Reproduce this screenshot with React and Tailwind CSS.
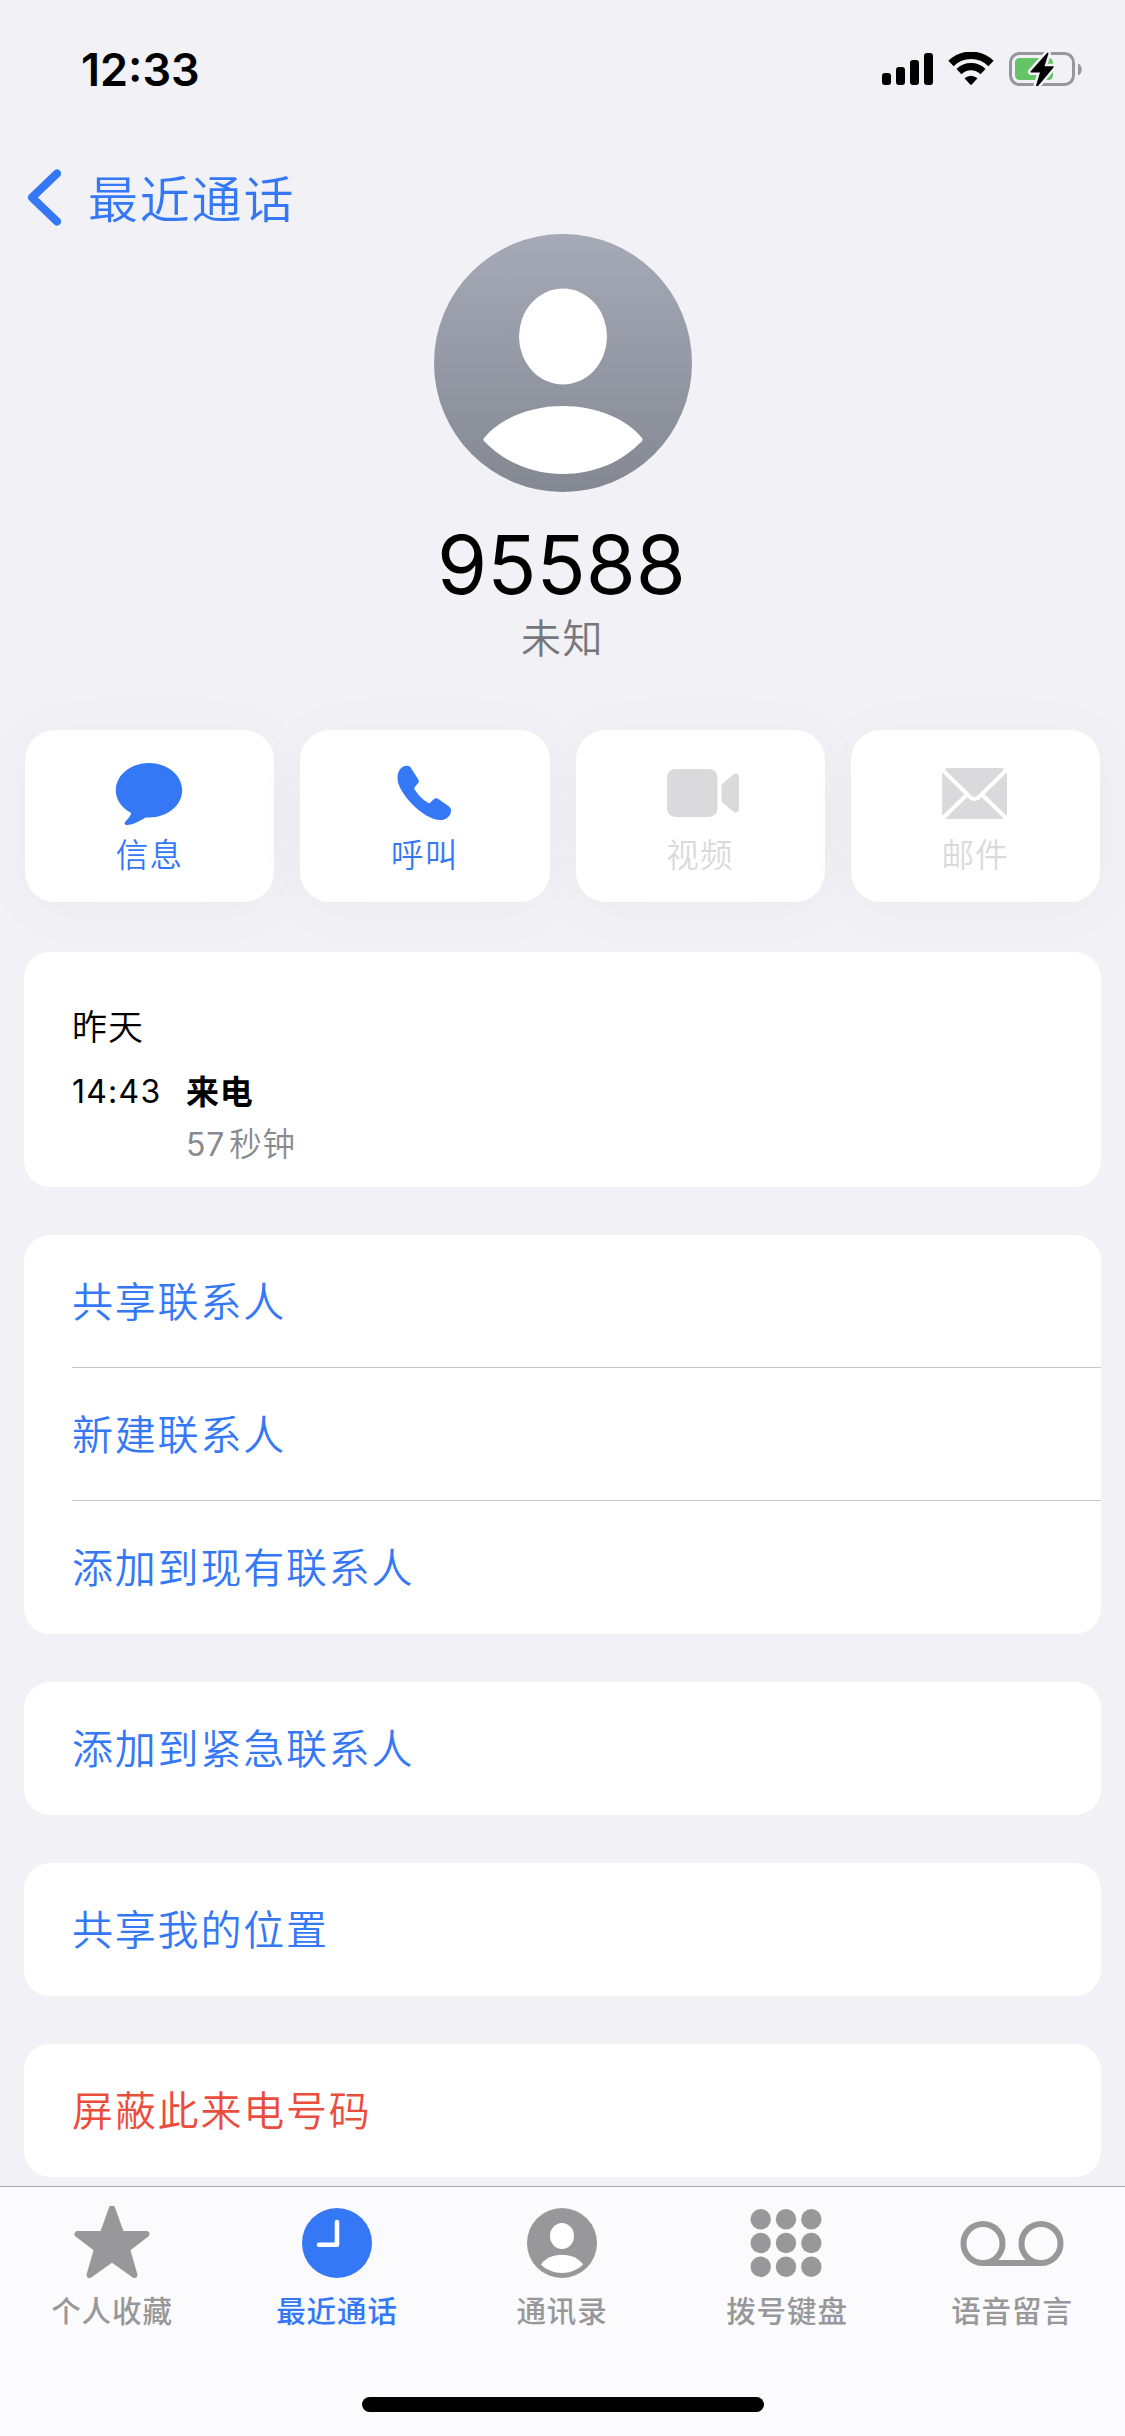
const ACTIONS = [
  { label: "信息", icon: MessageIcon, enabled: true },
  { label: "呼叫", icon: PhoneIcon, enabled: true },
  { label: "视频", icon: VideoIcon, enabled: false },
  { label: "邮件", icon: MailIcon, enabled: false },
];

const GROUPS = [
  { items: ["共享联系人", "新建联系人", "添加到现有联系人"] },
  { items: ["添加到紧急联系人"] },
  { items: ["共享我的位置"] },
  { items: ["屏蔽此来电号码"], danger: true },
];

const TABS = [
  { label: "个人收藏", icon: StarIcon },
  { label: "最近通话", icon: ClockIcon, active: true },
  { label: "通讯录", icon: ContactIcon },
  { label: "拨号键盘", icon: KeypadIcon },
  { label: "语音留言", icon: VoicemailIcon },
];

function MessageIcon() {
  return (
    <svg className="mr-[1px]" width="68" height="64" viewBox="0 0 68 64" fill="currentColor">
      <path d="M34 2C52.500 2 67.200 15 67.200 31C67.200 47 52.500 60 34 60C33 60 31.500 60 30.500 60C24.500 64.200 17 68 12 68C9.500 68 9 66 10.500 64.300C12.500 62 15 59 16 56.300C16.300 55.500 16 55.100 15.300 54.700C6.500 49.500 0.800 41 0.800 31C0.800 15 15.500 2 34 2Z" transform="scale(1 0.94)" />
    </svg>
  );
}

function PhoneIcon() {
  return (
    <svg width="55" height="56" viewBox="0 0 56 56" fill="currentColor">
      <path d="M12.300 0.700C13.600 1.300 14.300 2.500 15.200 4L21.700 14.200C22.600 15.800 22.300 17.100 21.200 18.400L18 22.200C17.400 22.900 17.400 23.500 17.800 24.200C21.300 29.800 26 34.700 31.800 38.200C32.500 38.600 33.100 38.600 33.700 38L37.200 34.700C38.700 33.300 40.300 33 42.100 34.100L52.300 41.200C54.200 42.500 55 43.800 55 45.700C55 51 50.300 55.500 44.300 55.500C35 55.500 24.500 48.500 15.500 39.500C6.500 30 0.500 20.500 0.500 12.800C0.500 6 3.800 1.700 8 0.500C9.500 0.100 11 0.100 12.300 0.700Z" />
    </svg>
  );
}

function VideoIcon() {
  return (
    <svg className="ml-[5px]" width="72" height="48" viewBox="0 0 72 48" fill="currentColor">
      <rect width="50.500" height="48" rx="8.500" />
      <path d="M54.500 17.500C54.500 16 55 15 56.200 14L65.500 6C67 4.700 68.300 4.200 69.500 4.600C71.200 5.100 72 6.500 72 8.500V39.500C72 41.500 71.200 42.900 69.500 43.400C68.300 43.800 67 43.300 65.500 42L56.200 34C55 33 54.500 32 54.500 30.500Z" />
    </svg>
  );
}

function MailIcon() {
  return (
    <svg className="mr-[1px]" width="65" height="51" viewBox="0 0 65 51" fill="none">
      <rect width="65" height="51" rx="6" fill="currentColor" />
      <path d="M0 1.500L27.500 28.500Q32.500 33.500 37.500 28.500L65 1.500M0.500 50.500L25 26.500M64.500 50.500L40 26.500" stroke="white" strokeWidth="4" />
    </svg>
  );
}

function StarIcon() {
  return (
    <svg className="mr-[1px]" width="78" height="74" viewBox="0 0 78 74" fill="currentColor">
      <path d="M39 3.500L48.300 29.500H73.500L54 44.500L61.500 70.500L39 54.500L16.500 70.500L24 44.500L4.500 29.500H29.700Z" stroke="currentColor" strokeWidth="6" strokeLinejoin="round" transform="translate(0 -1.500)" />
    </svg>
  );
}

function ClockIcon() {
  return (
    <svg className="mr-[2px]" width="70" height="70" viewBox="0 0 70 70">
      <circle cx="35" cy="35" r="35" fill="currentColor" />
      <path d="M35 14V36.700H17" fill="none" stroke="white" strokeWidth="4.600" strokeLinecap="round" strokeLinejoin="round" />
    </svg>
  );
}

function ContactIcon() {
  return (
    <svg className="mr-[2px]" width="70" height="70" viewBox="0 0 70 70">
      <circle cx="35" cy="35" r="35" fill="currentColor" />
      <ellipse cx="35" cy="28" rx="12" ry="13" fill="white" />
      <path d="M14 56.500C18 50.500 26 46.800 35 46.800S52 50.500 56 56.500C50.500 62 43 65 35 65S19.500 62 14 56.500Z" fill="white" />
    </svg>
  );
}

function KeypadIcon() {
  return (
    <svg className="mr-[3px]" width="72" height="70" viewBox="0 0 72 70" fill="currentColor">
      {[11.2, 35, 58.8].map((cy) =>
        [10.7, 36, 61.3].map((cx) => <circle key={cx + "-" + cy} cx={cx} cy={cy} r="10.200" />)
      )}
    </svg>
  );
}

function VoicemailIcon() {
  return (
    <svg className="mr-[1px]" width="104" height="70" viewBox="0 0 104 70" fill="none" stroke="currentColor" strokeWidth="6">
      <circle cx="23" cy="35.500" r="19.500" />
      <circle cx="81" cy="35.500" r="19.500" />
      <path d="M23 55H81" />
    </svg>
  );
}

function StatusBar() {
  return (
    <div className="flex h-[138px] items-center justify-between pr-[43px] pl-[81px]">
      <span className="font-['Inter',sans-serif] text-[45px] leading-none font-semibold">12:33</span>
      <div className="flex items-center">
        <svg width="51" height="34" viewBox="0 0 51 34">
          <rect x="0" y="21" width="9" height="12" rx="3" />
          <rect x="14" y="15" width="9" height="18" rx="3" />
          <rect x="28" y="8" width="9" height="25" rx="3" />
          <rect x="42" y="1" width="9" height="32" rx="3" />
        </svg>
        <svg className="ml-[15px]" width="46" height="34" viewBox="0 0 46 34">
          <path d="M3 11.500A28.500 28.500 0 0 1 43 11.500" fill="none" stroke="black" strokeWidth="7.500" />
          <path d="M11 19.600A17.200 17.200 0 0 1 35 19.600" fill="none" stroke="black" strokeWidth="7.200" />
          <path d="M16.500 26.300Q23 21.200 29.500 26.300L23.800 32.600Q23 33.400 22.200 32.600Z" />
        </svg>
        <svg className="ml-[15px]" width="73" height="38" viewBox="0 0 73 38">
          <rect x="1.500" y="3.500" width="63" height="31" rx="9" fill="none" stroke="#97969b" strokeWidth="3" />
          <path d="M69 13.500C74 15.500 74 23.500 69 25.500Z" fill="#97969b" />
          <rect x="6" y="8" width="38" height="22" rx="4.500" fill="#65c466" />
          <path d="M38 3L21.500 21.500Q21 22.500 22 22.500H31L27 35.500Q28 37 29.500 35.500L44.500 17.500Q45.200 16.300 44 16.300H35.500L39.500 3.500Q39.500 2 38 3Z" stroke="#f1f1f6" strokeWidth="5" strokeLinejoin="round" paintOrder="stroke" />
        </svg>
      </div>
    </div>
  );
}

function Avatar() {
  return (
    <svg width="258" height="258" viewBox="0 0 258 258">
      <defs>
        <linearGradient id="avatar" x1="0" y1="0" x2="0" y2="1">
          <stop offset="0" stopColor="#a6aab7" />
          <stop offset="1" stopColor="#848892" />
        </linearGradient>
      </defs>
      <circle cx="129" cy="129" r="129" fill="url(#avatar)" />
      <ellipse cx="129" cy="102.500" rx="44" ry="48" fill="white" />
      <path d="M50 204C66 184.500 96 172 129 172S192 184.500 208 204Q209 205.500 208 207C188 228 160 240 129 240S70 228 50 207Q48.900 205.500 50 204Z" fill="white" />
    </svg>
  );
}

export default function App() {
  return (
    <div className="flex h-[2436px] w-[1125px] flex-col overflow-hidden bg-[#f1f1f6] font-['Noto_Sans_CJK_SC',sans-serif] font-[350] text-black">
      <StatusBar />

      {/* Navigation */}
      <div className="flex h-[96px] items-center pt-[24px] pl-[27px] text-[#3478f6]">
        <svg width="34" height="58" viewBox="0 0 34 58" fill="none" stroke="currentColor" strokeWidth="8" strokeLinecap="round" strokeLinejoin="round">
          <path d="M30 4.500L5 28.500L30 52.500" />
        </svg>
        <span className="-mt-[4px] ml-[27px] text-[50px] leading-[60px] tracking-[1.800px]">最近通话</span>
      </div>

      {/* Contact header */}
      <div className="flex h-[496px] flex-col items-center">
        <Avatar />
        <h1 className="mt-[33px] pr-[2px] font-['Inter',sans-serif] text-[81px] leading-[80px] font-normal">95588</h1>
        <p className="mt-[8px] font-['Liberation_Sans','Noto_Sans_CJK_SC',sans-serif] text-[40px] leading-[52px] tracking-[1.500px] text-[#77777b]">未知</p>
      </div>

      {/* Actions */}
      <div className="grid h-[172px] shrink-0 grid-cols-4 gap-[26px] px-[25px]">
        {ACTIONS.map(({ label, icon: Icon, enabled }) => (
          <button
            key={label}
            className={`flex flex-col items-center rounded-[30px] bg-white pt-[30px] shadow-[0_6px_60px_rgba(0,0,0,0.035)] ${enabled ? "text-[#3478f6]" : "text-[#dadadc]"}`}
          >
            <span className="flex h-[66px] items-center">
              <Icon />
            </span>
            <span className="mt-[7px] text-[32.500px] leading-[40px] tracking-[1.300px]">{label}</span>
          </button>
        ))}
      </div>

      <div className="mt-[50px] flex min-h-0 flex-1 flex-col gap-[48px] overflow-hidden px-[24px]">
        {/* Call log */}
        <div className="h-[235px] shrink-0 rounded-[26px] bg-white pt-[49px] pl-[48px]">
          <p className="text-[35px] leading-[48px] tracking-[1px]">昨天</p>
          <div className="mt-[19px] grid grid-cols-[114px_1fr]">
            <span className="font-['Inter',sans-serif] text-[32px] leading-[48px] font-normal tracking-[1.200px]">14:43</span>
            <span className="text-[33px] leading-[44px] font-bold tracking-[0.800px]">来电</span>
            <span className="col-start-2 text-[32.500px] leading-[52px] tracking-[0.800px] text-[#8a8a8e]">
              <span className="mr-[4px] font-['Inter',sans-serif] text-[32px] font-normal">57</span>秒钟
            </span>
          </div>
        </div>

        {/* Contact options */}
        {GROUPS.map(({ items, danger }) => (
          <div key={items[0]} className={`shrink-0 rounded-[26px] bg-white pl-[48px] ${danger ? "text-[#eb4d3d]" : "text-[#3478f6]"}`}>
            {items.map((item) => (
              <div key={item} className="h-[133px] border-b border-[#c6c6c8] text-[41px] leading-[128px] tracking-[1.800px] last:border-b-0">
                {item}
              </div>
            ))}
          </div>
        ))}
      </div>

      {/* Tab bar */}
      <nav className="flex h-[250px] shrink-0 flex-col items-center border-t border-[#a9a9ad] bg-[#fbfbfd]">
        <div className="grid w-full grid-cols-5 pt-[16px]">
          {TABS.map(({ label, icon: Icon, active }) => (
            <div key={label} className={`flex flex-col items-center ${active ? "text-[#3478f6]" : "text-[#98989b]"}`}>
              <span className="flex h-[80px] items-center">
                <Icon />
              </span>
              <span className="mt-[6px] pr-[1px] text-[29.500px] leading-[40px] font-medium tracking-[0.900px]">{label}</span>
            </div>
          ))}
        </div>
        <div className="mt-[68px] h-[15px] w-[402px] rounded-full bg-black" />
      </nav>
    </div>
  );
}
